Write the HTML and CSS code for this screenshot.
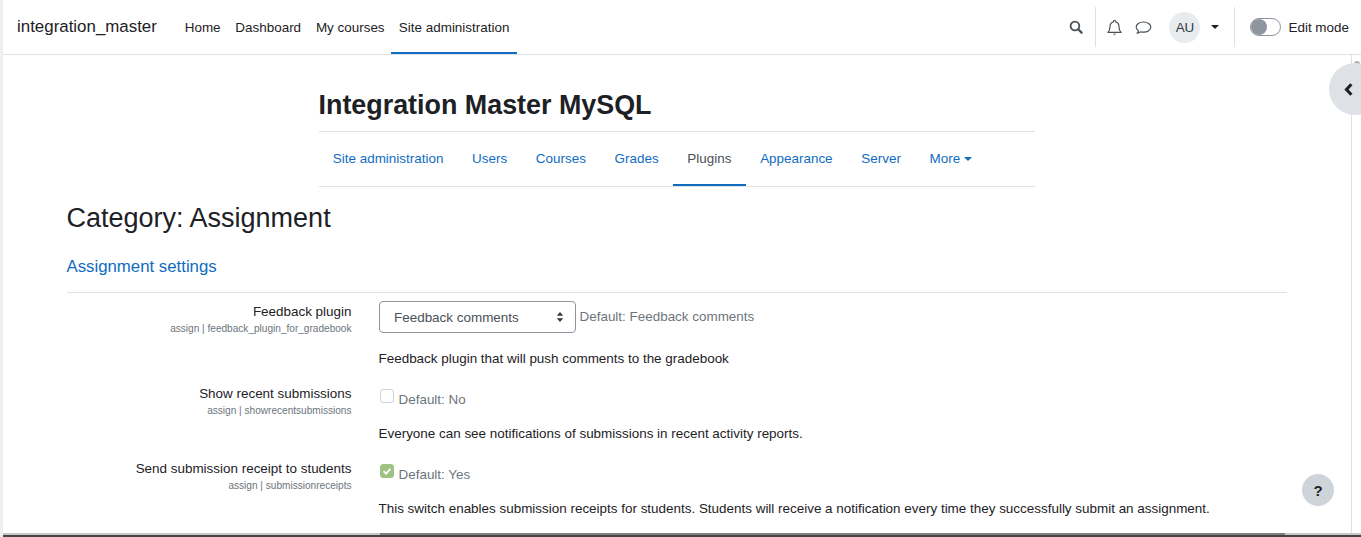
FILE: index.html
```html
<!DOCTYPE html>
<html lang="en">
<head>
<meta charset="utf-8">
<title>Category: Assignment</title>
<link rel="stylesheet" href="styles.css">
</head>
<body>
<div class="strip"></div>
<div class="page">
  <nav class="navbar">
    <a class="brand">integration_master</a>
    <ul class="primary">
      <li>Home</li>
      <li>Dashboard</li>
      <li>My courses</li>
      <li class="active">Site administration</li>
    </ul>
    <div class="tools">
      <svg class="ico search" viewBox="0 0 16 16"><circle cx="6.8" cy="6.8" r="5" fill="none" stroke="#495057" stroke-width="2.100"/><path d="M10.500 10.500 14.400 14.400" stroke="#495057" stroke-width="2.600" stroke-linecap="round"/></svg>
      <span class="vr vr1"></span>
      <svg class="ico bell" viewBox="0 0 16 16"><path d="M8 1.200c-.6 0-1 .4-1 1v.5C4.900 3.200 3.800 5 3.800 7c0 3-.8 4.300-2 5.600h12.400c-1.200-1.300-2-2.600-2-5.600 0-2-1.100-3.800-3.200-4.300v-.5c0-.6-.4-1-1-1Z" fill="none" stroke="#495057" stroke-width="1.100" stroke-linejoin="round"/><path d="M6.500 13.800a1.600 1.600 0 0 0 3 0Z" fill="#495057"/></svg>
      <svg class="ico chat" viewBox="0 0 16 16"><path d="M8 2.800c-3.800 0-6.900 2.100-6.900 4.800 0 1.400.8 2.600 2.100 3.500-.2.900-.7 1.700-1.200 2.300 1.300-.1 2.500-.7 3.400-1.300.8.200 1.700.3 2.600.3 3.800 0 6.900-2.100 6.900-4.800S11.800 2.800 8 2.800Z" fill="none" stroke="#495057" stroke-width="1.100" stroke-linejoin="round"/></svg>
      <span class="avatar">AU</span>
      <span class="caret dark"></span>
      <span class="vr vr2"></span>
      <span class="switch"><span class="knob"></span></span>
      <span class="editlabel">Edit mode</span>
    </div>
  </nav>

  <div class="rail"></div>
  <div class="thumb"></div>
  <button class="drawer-toggle" aria-label="Open block drawer">
    <svg viewBox="0 0 9 13"><path d="M7.400 1.300 2.500 6.500l4.900 5.200" fill="none" stroke="#1d2125" stroke-width="3.100"/></svg>
  </button>

  <main class="main">
    <header class="narrow">
      <h1>Integration Master MySQL</h1>
      <ul class="tabs">
        <li>Site administration</li>
        <li>Users</li>
        <li>Courses</li>
        <li>Grades</li>
        <li class="active">Plugins</li>
        <li>Appearance</li>
        <li>Server</li>
        <li>More<span class="caret"></span></li>
      </ul>
    </header>

    <h2>Category: Assignment</h2>
    <h3>Assignment settings</h3>

    <section class="settings">
      <div class="row first">
        <div class="label"><div class="name">Feedback plugin</div><div class="key">assign | feedback_plugin_for_gradebook</div></div>
        <div class="field">
          <div class="control">
            <span class="select">Feedback comments
              <svg viewBox="0 0 8 12"><path d="M4 1 7.200 4.800H.8ZM4 11 .8 7.200h6.400Z" fill="#343a40"/></svg>
            </span>
            <span class="default def-select">Default: Feedback comments</span>
          </div>
          <p class="desc">Feedback plugin that will push comments to the gradebook</p>
        </div>
      </div>
      <div class="row">
        <div class="label"><div class="name">Show recent submissions</div><div class="key">assign | showrecentsubmissions</div></div>
        <div class="field">
          <div class="control check">
            <span class="box"></span>
            <span class="default">Default: No</span>
          </div>
          <p class="desc">Everyone can see notifications of submissions in recent activity reports.</p>
        </div>
      </div>
      <div class="row">
        <div class="label"><div class="name">Send submission receipt to students</div><div class="key">assign | submissionreceipts</div></div>
        <div class="field">
          <div class="control check">
            <span class="box on"><svg viewBox="0 0 14 14"><path d="M3 7.200 5.900 10 11 4.600" fill="none" stroke="#fff" stroke-width="2.200"/></svg></span>
            <span class="default">Default: Yes</span>
          </div>
          <p class="desc">This switch enables submission receipts for students. Students will receive a notification every time they successfully submit an assignment.</p>
        </div>
      </div>
    </section>
  </main>

  <button class="help" aria-label="Help">?</button>
  <div class="edge"><div class="edge-dark"></div></div>
  <div class="bottombar"></div>
</div>
</body>
</html>
```

FILE: styles.css
```css
* { box-sizing: border-box; }
html, body { margin: 0; height: 100%; overflow: hidden; background: #fff; }
body {
  display: flex;
  font-family: "Liberation Sans", Arial, sans-serif;
  font-size: 13.44px;
  color: #1d2125;
}
ul { list-style: none; margin: 0; padding: 0; }
.strip { width: 3px; flex: none; background: #efefef; }
.page { flex: 1; position: relative; min-width: 0; height: 537px; overflow: hidden; }

/* top navigation */
.navbar {
  height: 55px;
  display: flex;
  align-items: center;
  border-bottom: 1px solid #dee2e6;
  padding-left: 14px;
}
.brand { font-size: 16.9px; width: 161px; flex: none; }
.primary { display: flex; height: 54px; margin-left: -.7px; }
.primary li { padding: 0 7.400px; line-height: 56px; position: relative; }
.primary li.active { margin-left: -.5px; }
.primary li.active::after {
  content: ""; position: absolute; left: 0; right: 0; bottom: 0; height: 2px; background: #0f6cbf;
}
.tools { margin-left: auto; display: flex; align-items: center; height: 40px; padding-right: 12px; }
.ico { display: block; flex: none; }
.search { width: 14px; height: 14px; margin-right: 12px; }
.vr { display: block; width: 1px; height: 40px; background: #dee2e6; flex: none; }
.bell { width: 17px; height: 17px; margin-left: 10px; }
.chat { width: 17px; height: 17px; margin-left: 12px; }
.avatar {
  width: 31px; height: 31px; border-radius: 50%; background: #e9ecef; margin-left: 17px;
  display: flex; align-items: center; justify-content: center; color: #343a40;
}
.caret {
  display: inline-block; width: 0; height: 0;
  border-top: 4.500px solid currentColor; border-left: 4.500px solid transparent; border-right: 4.500px solid transparent;
  margin-left: 3.500px; vertical-align: 2px;
}
.caret.dark { color: #1d2125; margin-left: 11px; margin-right: 15px; vertical-align: 0; }
.switch {
  width: 31px; height: 18px; border: 1px solid #8f959e; border-radius: 9px; margin-left: 15px;
  display: flex; align-items: center; flex: none;
}
.knob { width: 16px; height: 16px; border-radius: 50%; background: #8f959e; }
.editlabel { margin-left: 7px; }

/* right drawer handle and scrollbar rail */
.rail { position: absolute; top: 55px; bottom: 0; left: 1348px; width: 1px; background: #dee2e6; }
.thumb { position: absolute; top: 61px; left: 1351px; width: 6px; height: 4px; border-radius: 3px 3px 0 0; background: #b0b0b0; }
.drawer-toggle {
  position: absolute; left: 1326px; top: 63px; width: 52px; height: 52px; padding: 0 0 0 15px;
  border: 0; border-radius: 50%; background: #dee2e6; display: flex; align-items: center;
}
.drawer-toggle svg { width: 9px; height: 13px; display: block; }

/* main column */
.main { padding: 0 74px 0 63.500px; }
.narrow { width: 716px; margin-left: 252px; }
h1 { margin: 0; font-size: 26.88px; font-weight: 700; line-height: 32px; padding: 34px 0 10px; border-bottom: 1px solid #dee2e6; }
.tabs { display: flex; height: 55px; border-bottom: 1px solid #dee2e6; }
.tabs li { padding: 0 14.350px; line-height: 54px; color: #0f6cbf; position: relative; }
.tabs li.active { color: #495057; }
.tabs li.active::after { content: ""; position: absolute; left: 0; right: 0; bottom: 0; height: 2px; background: #0f6cbf; }
h2 { margin: 0; font-size: 27px; font-weight: 400; line-height: 32px; padding-top: 15px; }
h3 { margin: 0; font-size: 16.800px; font-weight: 400; line-height: 20px; color: #0f6cbf; padding-top: 23px; padding-bottom: 15px; border-bottom: 1px solid #dee2e6; width: 1220.500px; }
.settings { display: flex; flex-direction: column; }
.row { display: flex; height: 75px; }
.row.first { height: 82px; padding-top: 8px; }
.label { width: 285px; flex: none; text-align: right; padding-top: 11px; }
.row.first .label { padding-top: 3px; }
.name { line-height: 16px; }
.key { font-size: 10.080px; line-height: 12px; color: #6c757d; margin-top: 3px; }
.field { margin-left: 27px; flex: 1; }
.control { display: flex; align-items: flex-start; }
.select {
  width: 197px; height: 32px; border: 1px solid #8f959e; border-radius: 4px; padding: 0 11px 0 14.500px;
  display: flex; align-items: center; justify-content: space-between; color: #495057;
}
.select svg { width: 8px; height: 12px; display: block; }
.default { color: #6c757d; }
.def-select { margin-left: 4px; line-height: 16px; margin-top: 8px; }
.desc { margin: 0; line-height: 16px; }
.first .desc { margin-top: 18px; }
.check { height: 29px; padding-top: 14px; padding-left: 1.500px; }
.box { width: 14px; height: 14px; border: 1px solid #ced4da; border-radius: 3px; flex: none; background: #fff; display: block; }
.box.on { border-color: #9fc283; background: #9fc283; }
.box svg { display: block; width: 12px; height: 12px; }
.check .default { margin-left: 4.500px; margin-top: 3px; line-height: 16px; }
.check + .desc { margin-top: 22px; }
.help {
  position: absolute; left: 1299px; top: 474px; width: 32px; height: 32px; border: 0; border-radius: 50%;
  background: #ced4da; color: #1d2125; font: 700 15px "Liberation Sans", Arial, sans-serif; padding: 0;
}

/* clipped bottom of the window */
.edge { position: absolute; left: 0; right: 0; top: 533px; height: 2px; background: #c8c8c8; }
.edge-dark { position: absolute; left: 377px; width: 905px; top: 0; height: 2px; background: #808080; }
.bottombar { position: absolute; left: -3px; right: 0; top: 535px; height: 2px; background: #444; }
```
